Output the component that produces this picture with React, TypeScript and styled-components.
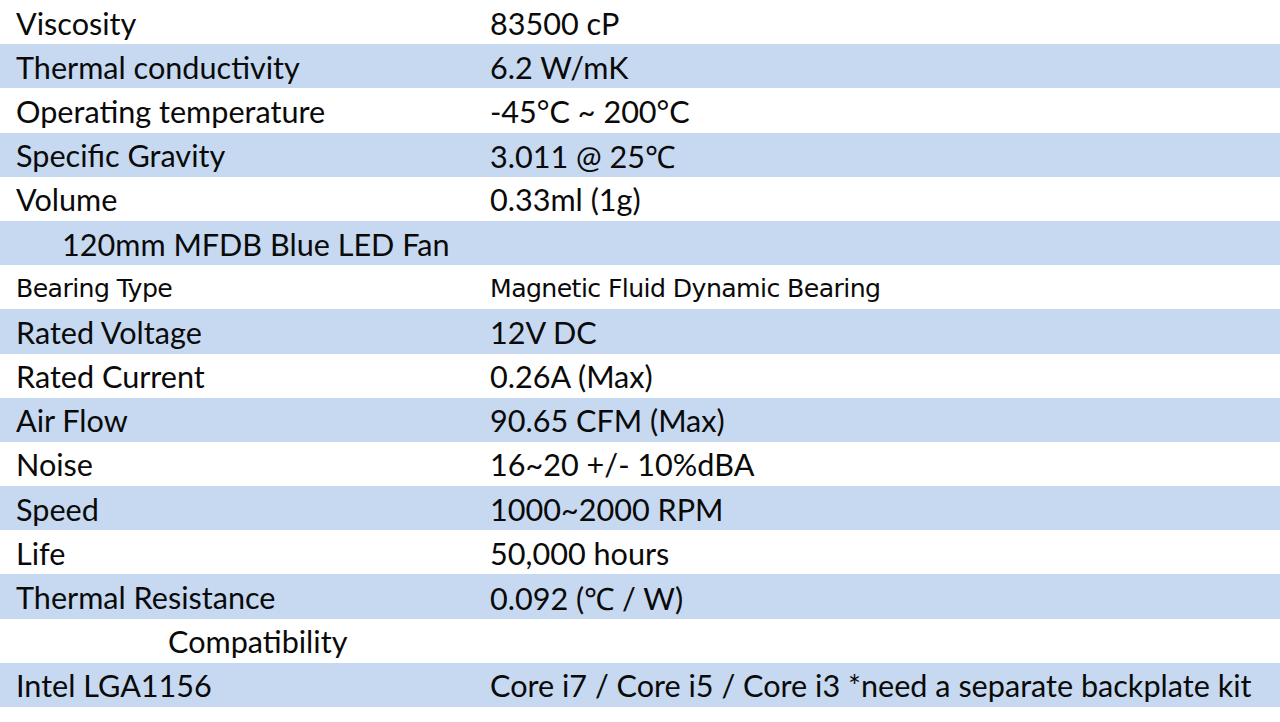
import React from "react";
import styled, { createGlobalStyle } from "styled-components";

type Spec = { label: string; value?: string; heading?: number; small?: boolean };

const specs: Spec[] = [
     { label: "Viscosity", value: "83500 cP" },
     { label: "Thermal conductivity", value: "6.2 W/mK" },
     { label: "Operating temperature", value: "-45°C ~ 200°C" },
     { label: "Specific Gravity", value: "3.011 @ 25℃" },
     { label: "Volume", value: "0.33ml (1g)" },
     { label: "120mm MFDB Blue LED Fan", heading: 62 },
     { label: "Bearing Type", value: "Magnetic Fluid Dynamic Bearing", small: true },
     { label: "Rated Voltage", value: "12V DC" },
     { label: "Rated Current", value: "0.26A (Max)" },
     { label: "Air Flow", value: "90.65 CFM (Max)" },
     { label: "Noise", value: "16~20 +/- 10%dBA" },
     { label: "Speed", value: "1000~2000 RPM" },
     { label: "Life", value: "50,000 hours" },
     { label: "Thermal Resistance", value: "0.092 (℃ / W)" },
     { label: "Compatibility", heading: 168 },
     { label: "Intel LGA1156", value: "Core i7 / Core i5 / Core i3 *need a separate backplate kit" },
     { label: "Intel LGA1366", value: "Core i7" },
];

export default function App() {
     return (
          <>
               <Global />
               <S.Table>
                    {specs.map((s, i) => (
                         <S.Row
                              key={s.label}
                              $shaded={i % 2 === 1}
                              $small={s.small}
                              $last={i === specs.length - 1}
                         >
                              {s.heading !== undefined ? (
                                   <S.Heading $indent={s.heading}>{s.label}</S.Heading>
                              ) : (
                                   <>
                                        <S.Label>{s.label}</S.Label>
                                        <S.Value>{s.value}</S.Value>
                                   </>
                              )}
                         </S.Row>
                    ))}
               </S.Table>
          </>
     );
}

const Global = createGlobalStyle`
     html, body {
          margin: 0;
          background: #ffffff;
          overflow: hidden;
     }
`;

const S = {
     Table: styled.div`
          width: 1280px;
          height: 722px;
          overflow: hidden;
          display: flex;
          flex-direction: column;
          color: #0a0a0a;
     `,
     Row: styled.div<{ $shaded: boolean; $small?: boolean; $last?: boolean }>`
          flex: none;
          box-sizing: border-box;
          height: 44.19px;
          padding-top: ${(p) => (p.$last ? "14px" : "2px")};
          display: grid;
          grid-template-columns: 490px 1fr;
          align-items: ${(p) => (p.$last ? "start" : "center")};
          background: ${(p) => (p.$shaded ? "#c6d9f0" : "#ffffff")};
          font-size: ${(p) => (p.$small ? "25.2px" : "30.6px")};
          font-family: ${(p) => (p.$small ? `"DejaVu Sans", Lato, sans-serif` : `Lato, sans-serif`)};
          letter-spacing: ${(p) => (p.$small ? "-0.6px" : "0")};
          white-space: nowrap;
     `,
     Label: styled.div`
          padding-left: 16px;
     `,
     Value: styled.div``,
     Heading: styled.div<{ $indent: number }>`
          grid-column: 1 / -1;
          padding-left: ${(p) => p.$indent}px;
     `,
};
